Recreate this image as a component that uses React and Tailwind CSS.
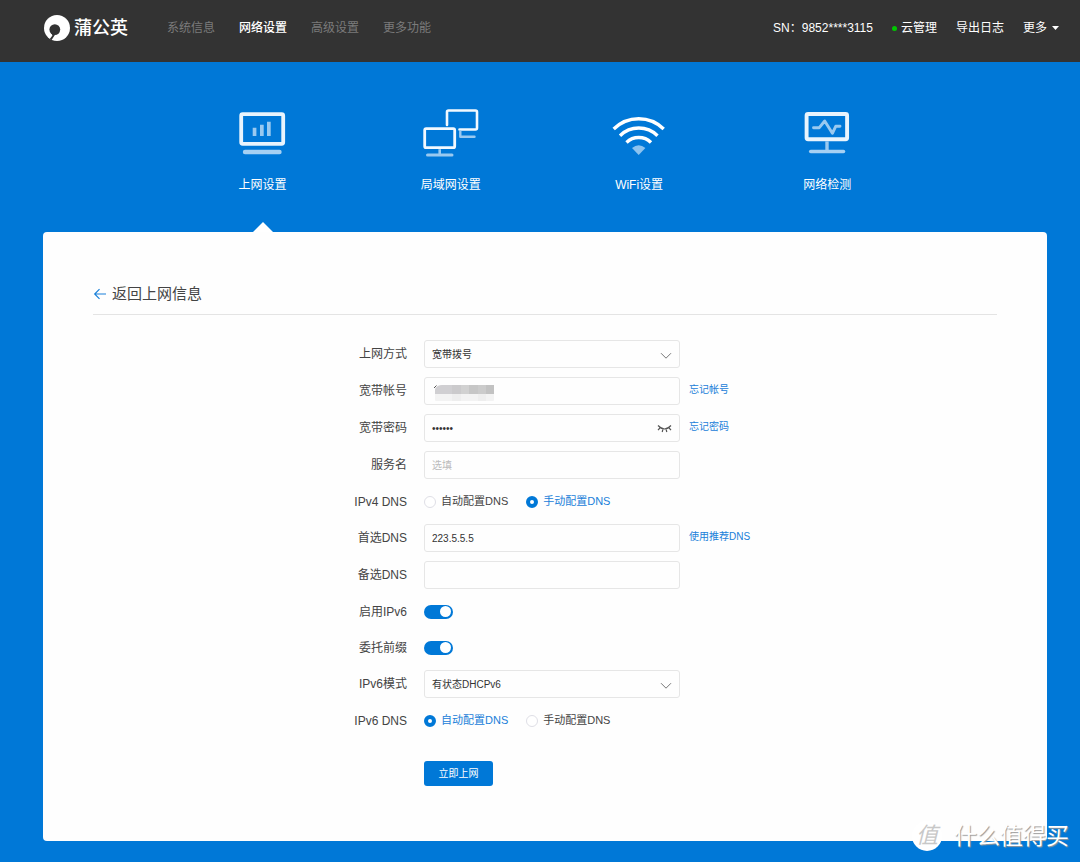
import React, { useState } from "react";

const MENU = ["系统信息", "网络设置", "高级设置", "更多功能"];

const Logo = () => (
    <svg viewBox="0 0 26 26" className="size-[26px]" aria-hidden="true">
        <circle cx="13" cy="13" r="13" fill="#fff" />
        <circle cx="10.8" cy="14.6" r="5.4" fill="#333" />
        <path d="M7.2 17.5L8.4 20.6L5.6 24.2L7.6 25L11.2 19.6z" fill="#333" />
    </svg>
);

const WanIcon = () => (
    <svg viewBox="1 0 60 50" className="w-[60px] h-[50px]" fill="none" aria-hidden="true">
        <rect x="9.2" y="7.2" width="42" height="29.6" rx="1.5" stroke="#e9f4fd" strokeWidth="3.8" />
        <path d="M20.7 20.7h3.7V29h-3.7zM28 17.7h3.7V29H28zM35 14.7h3.7V29H35z" fill="#99c9f0" />
        <path d="M13 45h34.5" stroke="#a6d0f3" strokeWidth="4.4" strokeLinecap="round" />
    </svg>
);

const LanIcon = () => (
    <svg viewBox="1 0 60 50" className="w-[60px] h-[50px]" fill="none" aria-hidden="true">
        <path d="M27 18V5q0-1.5 1.5-1.5h27Q57 3.5 57 5v16q0 1.5-1.5 1.5H39.5" stroke="#f2f9ff" strokeWidth="2.6" strokeLinecap="round" />
        <path d="M40.3 24.5v5.2H54.5" stroke="#99c9f0" strokeWidth="2.4" strokeLinecap="round" strokeLinejoin="round" />
        <rect x="4.7" y="21.7" width="30" height="19" rx="1.5" stroke="#f2f9ff" strokeWidth="2.8" />
        <path d="M19.7 42.2v5" stroke="#99c9f0" strokeWidth="2.6" />
        <path d="M7.5 48h24.5" stroke="#99c9f0" strokeWidth="3" strokeLinecap="round" />
    </svg>
);

const WifiIcon = () => (
    <svg viewBox="0 0 60 50" className="w-[60px] h-[50px]" fill="none" aria-hidden="true">
        <g stroke="#fff" strokeWidth="3.4">
            <path d="M4.7 22a35.5 35.5 0 0 1 50 0" />
            <path d="M11 28.7a26.8 26.8 0 0 1 37.5 0" />
            <path d="M17.5 35.5a17.6 17.6 0 0 1 24.5 0" />
        </g>
        <path d="M23 41q6.7-5.6 13.4 0L29.7 48z" fill="#8cc3ef" />
    </svg>
);

const DetectIcon = () => (
    <svg viewBox="0 0 60 50" className="w-[60px] h-[50px]" fill="none" aria-hidden="true">
        <rect x="9.6" y="7" width="40.5" height="25.3" rx="1.5" stroke="#e9f4fd" strokeWidth="3.9" />
        <path d="M16.5 20.7h5.8l5.4-6.7 7.7 12.3 3.3-7h4.3" stroke="#99c9f0" strokeWidth="2.9" strokeLinecap="round" strokeLinejoin="round" />
        <path d="M30 34.3v9" stroke="#99c9f0" strokeWidth="3.4" />
        <path d="M13.7 44.5h32.8" stroke="#a6d0f3" strokeWidth="3.5" strokeLinecap="round" />
    </svg>
);

const TABS = [
    { name: "上网设置", Icon: WanIcon },
    { name: "局域网设置", Icon: LanIcon },
    { name: "WiFi设置", Icon: WifiIcon },
    { name: "网络检测", Icon: DetectIcon },
];

const inputClass = "block w-full h-7 px-[7px] rounded-[3px] border border-[#e6e6e6] bg-[#fefefe] text-[10px] text-[#333] placeholder-[#bbb] focus:outline-none focus:border-[#0078d7]";

const Row = ({ label, htmlFor, extra, children }) => (
    <div className="flex items-center h-7">
        <label htmlFor={htmlFor} className="w-[314px] text-right text-xs text-[#444]">{label}</label>
        <div className="relative w-64 ml-[17px]">{children}</div>
        {extra && <a href="#" className="ml-[9px] pb-[3px] text-[10px] text-[#1a80d9] hover:underline">{extra}</a>}
    </div>
);

const ControlRow = ({ label, htmlFor, children }) => (
    <div className="flex items-center h-[27px]">
        <label htmlFor={htmlFor} className="w-[314px] text-right text-xs text-[#444]">{label}</label>
        <div className="flex items-center ml-[17px]">{children}</div>
    </div>
);

const Select = ({ id, options }) => (
    <>
        <select id={id} className={`${inputClass} appearance-none`}>
            {options.map((o) => <option key={o}>{o}</option>)}
        </select>
        <svg viewBox="0 0 12 8" className="absolute right-2 top-[12px] w-3 h-2 pointer-events-none" fill="none" aria-hidden="true">
            <path d="M1 1.2L6 6.2l5-5" stroke="#777" />
        </svg>
    </>
);

const DnsRadios = ({ name, value, onChange }) => (
    <div className="flex gap-[18px]">
        {["自动配置DNS", "手动配置DNS"].map((text) => (
            <label key={text} className={`flex items-center gap-[5px] text-[11px] ${value === text ? "text-[#1a80d9]" : "text-[#444]"}`}>
                <input type="radio" name={name} checked={value === text} onChange={() => onChange(text)}
                    className="appearance-none size-3 rounded-full border border-[#dfdfe6] bg-white checked:border-4 checked:border-[#0078d7]" />
                {text}
            </label>
        ))}
    </div>
);

const Switch = ({ id }) => (
    <input id={id} type="checkbox" role="switch" defaultChecked
        className="appearance-none flex items-center w-[29px] h-[14px] rounded-full bg-gray-300 checked:bg-[#0078d7] before:size-[11px] before:ml-[2px] before:rounded-full before:bg-white checked:before:ml-4" />
);

export default function App() {
    const [dns4, setDns4] = useState("手动配置DNS");
    const [dns6, setDns6] = useState("自动配置DNS");
    const [showPassword, setShowPassword] = useState(false);

    return (
        <div lang="zh-CN" className="relative min-h-screen bg-[#0078d7] font-['Liberation_Sans','Noto_Sans_CJK_SC',sans-serif]">
            <header className="flex items-center h-[62px] pb-[6px] pl-[44px] pr-[21px] bg-[#333] text-xs">
                <a href="#" className="flex items-center gap-1 text-white">
                    <Logo />
                    <span className="text-[18px] leading-6 font-medium">蒲公英</span>
                </a>
                <nav className="flex gap-6 ml-[39px]">
                    {MENU.map((m) => (
                        <a key={m} href="#" className={m === "网络设置" ? "text-white font-medium" : "text-[#7b7b7b]"}>{m}</a>
                    ))}
                </nav>
                <div className="flex items-center gap-[19px] ml-auto text-white">
                    <span>SN：9852****3115</span>
                    <a href="#" className="flex items-center gap-1">
                        <span className="size-[5px] rounded-full bg-[#00c800]" />
                        云管理
                    </a>
                    <a href="#">导出日志</a>
                    <button type="button" className="flex items-center gap-[5px]">
                        更多
                        <svg viewBox="0 0 7 4" className="w-[7px] h-1" aria-hidden="true"><path d="M0 0h7L3.5 4z" fill="#fff" /></svg>
                    </button>
                </div>
            </header>

            <main className="pl-[43px] pr-[33px] pb-[21px]">
                <nav className="grid grid-cols-4 w-3/4 mx-auto pt-[45px]">
                    {TABS.map(({ name, Icon }, i) => (
                        <a key={name} href="#" className="relative flex flex-col items-center pb-[37px] text-xs leading-5 text-white">
                            <Icon />
                            <span className="mt-[18px]">{name}</span>
                            {i === 0 && (
                                <svg viewBox="0 0 20 10" className="absolute bottom-0 w-5 h-[10px]" aria-hidden="true"><path d="M0 10L10 0l10 10z" fill="#fff" /></svg>
                            )}
                        </a>
                    ))}
                </nav>

                <section className="rounded bg-[#fefefe] px-[50px] pt-[50px] pb-[55px]">
                    <a href="#" className="flex items-center gap-[5px] h-[33px] pb-[8px] border-b border-[#e4e4e4] text-[15px] text-[#444]">
                        <svg viewBox="0 0 14 12" className="w-[14px] h-3" fill="none" aria-hidden="true">
                            <path d="M13 6H2M6.5 1.2L1.7 6l4.8 4.8" stroke="#1a80d9" strokeWidth="1.2" />
                        </svg>
                        返回上网信息
                    </a>

                    <form className="flex flex-col gap-[9px] mt-[25px]" onSubmit={(e) => e.preventDefault()}>
                        <Row label="上网方式" htmlFor="mode">
                            <Select id="mode" options={["宽带拨号", "自动获取", "静态IP"]} />
                        </Row>
                        <Row label="宽带帐号" htmlFor="account" extra="忘记帐号">
                            <input id="account" className={inputClass} />
                            {/* masked account number */}
                            <svg viewBox="0 0 62 18" className="absolute left-[9px] top-[7px] w-[62px] h-[18px] pointer-events-none" aria-hidden="true">
                                <path d="M1 4L3.5 1.5" stroke="#555" />
                                <path d="M2 10V5Q4 1 9 1H19V10z" fill="#d0cfd2" />
                                <path d="M19 1h9v9h-9z" fill="#cbcacc" />
                                <path d="M28 1h8v9h-8z" fill="#d1d1d1" />
                                <path d="M36 1h9v9h-9z" fill="#c6c6c6" />
                                <path d="M45 1h8v9h-8z" fill="#cbcbcb" />
                                <path d="M53 1h8v9h-8z" fill="#c2c2c2" />
                                <path d="M2 10h59v6q0 1-1 1H3q-1 0-1-1z" fill="#f3f3f3" />
                                <path d="M19 10h9v7h-9zM45 10h8v7h-8z" fill="#eeeeee" />
                            </svg>
                        </Row>
                        <Row label="宽带密码" htmlFor="password" extra="忘记密码">
                            <input id="password" type={showPassword ? "text" : "password"} defaultValue="123456" className={inputClass} />
                            <button type="button" aria-label="显示密码" onClick={() => setShowPassword(!showPassword)} className="absolute right-2 top-[10px]">
                                <svg viewBox="0 0 15 9" className="w-[15px] h-[9px]" fill="none" stroke="#555" strokeWidth="1.2" aria-hidden="true">
                                    <path d="M1 1.5q6.5 7 13 0M3.3 3.5L1 6.2M6 4.8L5.2 8M9 4.8L9.8 8M11.7 3.5L14 6.2" />
                                </svg>
                            </button>
                        </Row>
                        <Row label="服务名" htmlFor="service">
                            <input id="service" placeholder="选填" className={inputClass} />
                        </Row>
                        <ControlRow label="IPv4 DNS">
                            <DnsRadios name="dns4" value={dns4} onChange={setDns4} />
                        </ControlRow>
                        <Row label="首选DNS" htmlFor="dns-primary" extra="使用推荐DNS">
                            <input id="dns-primary" defaultValue="223.5.5.5" className={inputClass} />
                        </Row>
                        <Row label="备选DNS" htmlFor="dns-secondary">
                            <input id="dns-secondary" className={inputClass} />
                        </Row>
                        <ControlRow label="启用IPv6" htmlFor="ipv6">
                            <Switch id="ipv6" />
                        </ControlRow>
                        <ControlRow label="委托前缀" htmlFor="prefix">
                            <Switch id="prefix" />
                        </ControlRow>
                        <Row label="IPv6模式" htmlFor="ipv6-mode">
                            <Select id="ipv6-mode" options={["有状态DHCPv6", "无状态DHCPv6"]} />
                        </Row>
                        <ControlRow label="IPv6 DNS">
                            <DnsRadios name="dns6" value={dns6} onChange={setDns6} />
                        </ControlRow>
                        <button type="submit" className="w-[69px] h-[25px] ml-[331px] mt-[18px] rounded-[3px] bg-[#0078d7] text-[10px] text-white hover:bg-[#0069bd]">
                            立即上网
                        </button>
                    </form>
                </section>
            </main>

            <div className="absolute right-[11px] bottom-[10px] flex items-center gap-3 pointer-events-none">
                <span className="flex items-center justify-center size-[30px] rounded-full bg-white text-[22px] leading-none italic text-[#c8c8c8]">值</span>
                <span className="text-[23px] leading-8 text-white [text-shadow:1px_1px_1px_#999]">什么值得买</span>
            </div>
        </div>
    );
}
